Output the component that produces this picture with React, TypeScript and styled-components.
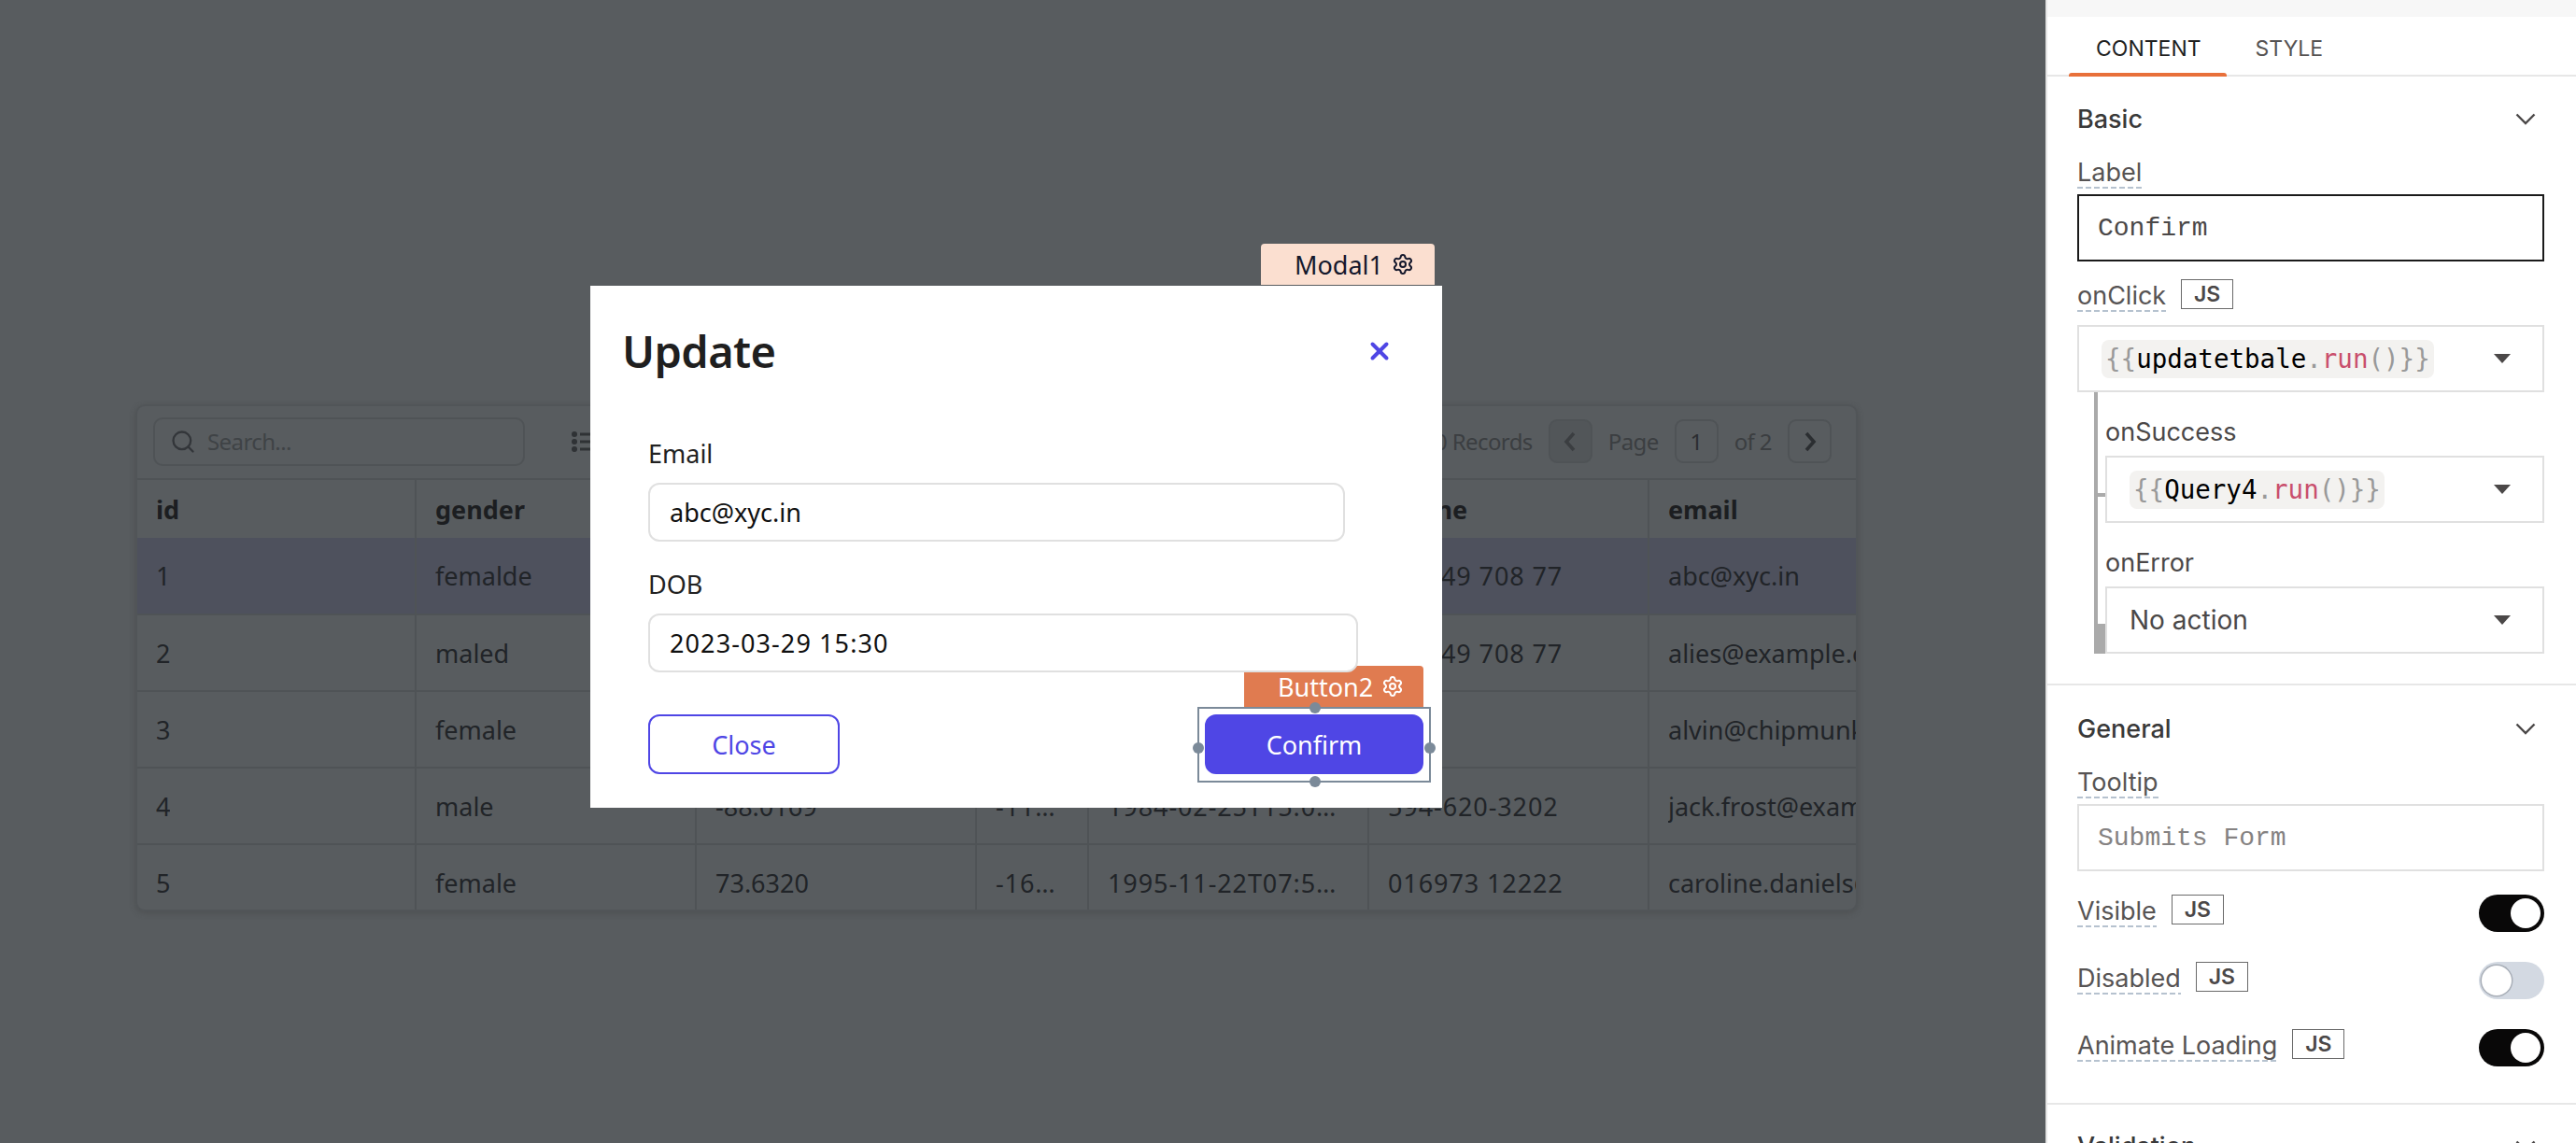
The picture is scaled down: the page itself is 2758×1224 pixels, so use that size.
import React from "react"
import styled, { createGlobalStyle } from "styled-components"
import { Search, Settings, X } from "lucide-react"

const GlobalStyle = createGlobalStyle`
  html, body {
    margin: 0;
    padding: 0;
    height: 1224px;
    overflow: hidden;
    background: #585c5f;
  }
  * {
    box-sizing: border-box;
  }
`

const BODY_FONT = `"Noto Sans", sans-serif`
const PANEL_FONT = `Inter, sans-serif`
const CODE_FONT = `"DejaVu Sans Mono", monospace`
const INPUT_FONT = `"Liberation Mono", monospace`

const Page = styled.div`
  display: flex;
  width: 2758px;
  height: 1224px;
  overflow: hidden;
`

const Canvas = styled.main`
  position: relative;
  width: 2190px;
  height: 1224px;
  flex: none;
  padding: 433px 0 0 145px;
  background: #585c5f;
  font-family: ${BODY_FONT};
`

/* table behind the modal */

const Table = styled.div`
  width: 1844px;
  height: 543px;
  overflow: hidden;
  border: 2px solid #515558;
  border-radius: 10px;
  box-shadow: 0 2px 6px rgba(60, 60, 60, 0.35);
`

const Toolbar = styled.div`
  display: flex;
  align-items: center;
  justify-content: space-between;
  height: 79px;
  padding: 0 26px 2px 17px;
  border-bottom: 2px solid #4f5356;
`

const SearchBox = styled.div`
  display: flex;
  align-items: center;
  gap: 12px;
  width: 398px;
  height: 52px;
  padding: 0 16px;
  border: 2px solid #4f5356;
  border-radius: 10px;
  color: #3f4346;
  font-size: 24px;
  letter-spacing: -0.6px;
`

const ToolbarLeft = styled.div`
  display: flex;
  align-items: center;
  gap: 49px;
`

const Pager = styled.div`
  display: flex;
  align-items: center;
  gap: 17px;
  color: #3b3e41;
  font-size: 24px;
  letter-spacing: -0.6px;
`

const PagerButton = styled.div<{ $disabled?: boolean }>`
  display: flex;
  align-items: center;
  justify-content: center;
  width: 47px;
  height: 47px;
  border: 2px solid #4f5356;
  border-radius: 9px;
  background: ${(p) => (p.$disabled ? "#525659" : "transparent")};
  color: ${(p) => (p.$disabled ? "#3b3e41" : "#2b2e31")};
`

const Row = styled.div<{ $selected?: boolean; $head?: boolean }>`
  display: grid;
  grid-template-columns: 299px 300px 300px 120px 300px 300px 221px;
  height: ${(p) => (p.$head ? 62 : p.$selected ? 83 : 82)}px;
  border-bottom: ${(p) => (p.$head ? "none" : "2px solid #4f5356")};
  background: ${(p) => (p.$selected ? "#4e515d" : "transparent")};
  color: ${(p) => (p.$head ? "#1c1e21" : "#212428")};
  font-size: 27px;
  font-weight: ${(p) => (p.$head ? 700 : 400)};
`

const Cell = styled.div<{ $clip?: boolean }>`
  display: flex;
  align-items: center;
  min-width: 0;
  padding: ${(p) => (p.$clip ? "0 0 0 20px" : "0 20px")};
  border-right: ${(p) => (p.$clip ? "none" : "2px solid #4f5356")};
  overflow: hidden;
`

const CellText = styled.span<{ $clip?: boolean; $wide?: boolean }>`
  overflow: hidden;
  white-space: nowrap;
  text-overflow: ${(p) => (p.$clip ? "clip" : "ellipsis")};
  letter-spacing: ${(p) => (p.$wide ? "0.9px" : "0")};
`

/* modal */

const Modal = styled.section`
  position: absolute;
  top: 306px;
  left: 632px;
  width: 912px;
  height: 559px;
  padding: 0 20px 0 34px;
  background: #ffffff;
  color: #222222;
  font-family: ${BODY_FONT};
`

const ModalHeader = styled.header`
  display: flex;
  align-items: center;
  justify-content: space-between;
  height: 160px;
  padding: 0 32px 20px 0;
`

const ModalTitle = styled.h1`
  margin: 0;
  font-size: 47px;
  font-weight: 600;
  letter-spacing: -0.6px;
  color: #1f1f1f;
`

const ModalField = styled.div<{ $width: number }>`
  width: ${(p) => p.$width}px;
  margin: 0 0 0 28px;
  padding-bottom: 26px;
`

const ModalLabel = styled.div`
  height: 40px;
  font-size: 27px;
  line-height: 40px;
`

const ModalInput = styled.div<{ $wide?: boolean }>`
  position: relative;
  z-index: 1;
  display: flex;
  align-items: center;
  height: 63px;
  margin-top: 11px;
  padding: 0 21px;
  border: 2px solid #e0e0e0;
  border-radius: 12px;
  background: #ffffff;
  color: #101010;
  font-size: 27px;
  letter-spacing: ${(p) => (p.$wide ? "1.1px" : "0")};
`

const ModalActions = styled.div`
  display: flex;
  justify-content: space-between;
  width: 830px;
  margin: 19px 0 0 28px;
`

const ActionButton = styled.div<{ $primary?: boolean; $width: number }>`
  position: relative;
  display: flex;
  align-items: center;
  justify-content: center;
  width: ${(p) => p.$width}px;
  height: 64px;
  border: 2px solid #4f46e5;
  border-radius: 12px;
  background: ${(p) => (p.$primary ? "#4f46e5" : "#ffffff")};
  color: ${(p) => (p.$primary ? "#ffffff" : "#4f46e5")};
  font-size: 27px;
`

const SelectionFrame = styled.div`
  position: absolute;
  top: -10px;
  right: -10px;
  bottom: -11px;
  left: -10px;
  border: 2px solid #7b8a99;
`

const Handle = styled.span<{ $side: "top" | "bottom" | "left" | "right" }>`
  position: absolute;
  width: 12px;
  height: 12px;
  border-radius: 50%;
  background: #7b8a99;
  ${(p) => p.$side === "top" && "top: -7px; left: 50%; margin-left: -5px;"}
  ${(p) => p.$side === "bottom" && "bottom: -7px; left: 50%; margin-left: -5px;"}
  ${(p) => p.$side === "left" && "left: -7px; top: 50%; margin-top: -3px;"}
  ${(p) => p.$side === "right" && "right: -7px; top: 50%; margin-top: -3px;"}
`

const WidgetTag = styled.div<{ $dark?: boolean }>`
  position: absolute;
  display: flex;
  align-items: center;
  gap: 9px;
  height: 44px;
  padding: 0 17px 0 36px;
  border-radius: 4px 4px 0 0;
  background: ${(p) => (p.$dark ? "#e07b50" : "#fbdfd0")};
  color: ${(p) => (p.$dark ? "#ffffff" : "#14182c")};
  font-family: ${BODY_FONT};
  font-size: 27px;
  white-space: nowrap;
`

const ModalTag = styled(WidgetTag)`
  top: 261px;
  left: 1350px;
  width: 186px;
`

const ButtonTag = styled(WidgetTag)`
  top: -54px;
  left: 40px;
  width: 192px;
`

/* property pane */

const Panel = styled.aside`
  width: 568px;
  height: 1224px;
  flex: none;
  overflow: hidden;
  border-left: 2px solid #e4e4e4;
  background: #ffffff;
  color: #4b4848;
  font-family: ${PANEL_FONT};
`

const PanelTop = styled.div`
  height: 18px;
  background: #f7f7f7;
`

const Tabs = styled.nav`
  display: flex;
  gap: 58px;
  height: 64px;
  padding-left: 52px;
  border-bottom: 2px solid #e7e7e7;
`

const Tab = styled.div<{ $active?: boolean }>`
  position: relative;
  height: 62px;
  padding-top: 18px;
  color: ${(p) => (p.$active ? "#1f1f1f" : "#555252")};
  font-size: 23px;
  line-height: 32px;
  ${(p) =>
    p.$active &&
    `&::after {
      content: "";
      position: absolute;
      left: -29px;
      right: -27px;
      bottom: -2px;
      height: 4px;
      border-radius: 3px 3px 0 0;
      background: #e8703a;
    }`}
`

const Section = styled.section<{ $pad: number }>`
  padding: 0 34px ${(p) => p.$pad}px 32px;
  border-bottom: 2px solid #e7e7e7;
`

const SectionHeader = styled.div<{ $top: number }>`
  display: flex;
  align-items: center;
  justify-content: space-between;
  height: 46px;
  margin-top: ${(p) => p.$top}px;
  padding-right: 9px;
  color: #393939;
  font-size: 27px;
  font-weight: 500;
`

const FieldRow = styled.div<{ $top: number; $between?: boolean }>`
  display: flex;
  align-items: flex-start;
  justify-content: ${(p) => (p.$between ? "space-between" : "flex-start")};
  margin-top: ${(p) => p.$top}px;
`

const LabelGroup = styled.div`
  display: flex;
  align-items: flex-start;
  gap: 16px;
`

const DashedLabel = styled.span<{ $offset?: number }>`
  display: block;
  height: 32px;
  margin-top: ${(p) => p.$offset ?? 0}px;
  padding-bottom: 2px;
  font-size: 27px;
  line-height: 30px;
  color: #575454;
  background: linear-gradient(to right, #b6c2cf 65%, transparent 0) left bottom / 9px 2px repeat-x;
  white-space: nowrap;
`

const JsBadge = styled.span`
  display: flex;
  align-items: center;
  justify-content: center;
  width: 56px;
  height: 32px;
  border: 1.5px solid #6a6a6a;
  color: #4b4848;
  font-size: 23px;
  font-weight: 600;
`

const TextInput = styled.div<{ $focused?: boolean; $muted?: boolean }>`
  display: flex;
  align-items: center;
  height: 72px;
  margin-top: 6px;
  padding-left: 20px;
  border: 2px solid ${(p) => (p.$focused ? "#1a1a1a" : "#e0e0e0")};
  color: ${(p) => (p.$muted ? "#858282" : "#4b4848")};
  font-family: ${INPUT_FONT};
  font-size: 28px;
`

const Dropdown = styled.div<{ $top: number }>`
  display: flex;
  align-items: center;
  justify-content: space-between;
  height: 72px;
  margin-top: ${(p) => p.$top}px;
  padding: 0 34px 0 24px;
  border: 2px solid #e0e0e0;
  font-size: 28px;
`

const CodeChip = styled.span`
  display: inline-block;
  height: 41px;
  padding: 0 4px;
  border-radius: 8px;
  background: #f3f2f0;
  color: #000000;
  font-family: ${CODE_FONT};
  font-size: 27.5px;
  line-height: 41px;
  white-space: nowrap;
`

const Brace = styled.span`
  color: #999999;
`

const Method = styled.span`
  color: #c94f6d;
`

const Nested = styled.div`
  position: relative;
  display: flow-root;
  margin-left: 18px;
  padding-left: 8px;
  border-left: 4px solid #aaaaaa;

  &::before {
    content: "";
    position: absolute;
    left: 0;
    top: 108px;
    width: 8px;
    height: 4px;
    background: #aaaaaa;
  }

  &::after {
    content: "";
    position: absolute;
    left: 0;
    bottom: 0;
    width: 8px;
    height: 32px;
    background: #aaaaaa;
  }
`

const NestedLabel = styled.div`
  height: 30px;
  margin-top: 28px;
  font-size: 27px;
  line-height: 30px;
  color: #4b4848;
`

const Toggle = styled.div<{ $on?: boolean }>`
  position: relative;
  width: 70px;
  height: 40px;
  border-radius: 20px;
  background: ${(p) => (p.$on ? "#090808" : "#d3d9e2")};

  &::after {
    content: "";
    position: absolute;
    top: 4px;
    left: ${(p) => (p.$on ? "34px" : "3px")};
    width: 32px;
    height: 32px;
    border-radius: 50%;
    background: #ffffff;
    box-shadow: ${(p) => (p.$on ? "none" : "0 0 0 1.5px #a9afb8")};
  }
`

const Chevron = () => (
  <svg width="22" height="13" viewBox="0 0 22 13">
    <polyline points="1.5,1.5 11,11 20.5,1.5" fill="none" stroke="#4b4848" strokeWidth="2.4" />
  </svg>
)

const Caret = () => (
  <svg width="18" height="10" viewBox="0 0 18 10">
    <polygon points="0,0 18,0 9,10" fill="#4b4848" />
  </svg>
)

const PagerArrow = ({ dir }: { dir: "left" | "right" }) => (
  <svg width="14" height="24" viewBox="0 0 14 24">
    <polyline
      points={dir === "left" ? "11,3 3,12 11,21" : "3,3 11,12 3,21"}
      fill="none"
      stroke="currentColor"
      strokeWidth="3.6"
    />
  </svg>
)

const FilterIcon = () => (
  <svg width="36" height="24" viewBox="0 0 36 24">
    <g fill="#2f3235">
      <circle cx="4" cy="4" r="3" />
      <rect x="10" y="2.5" width="26" height="3" />
      <circle cx="4" cy="12" r="3" />
      <rect x="10" y="10.5" width="26" height="3" />
      <circle cx="4" cy="20" r="3" />
      <rect x="10" y="18.5" width="26" height="3" />
    </g>
  </svg>
)

const columns = ["id", "gender", "latitude", "longitude", "dob", "phone", "email"]

const rows = [
  ["1", "femalde", "-49.4337", "-16.2", "1970-01-01T00:00:00.000Z", "762 49 708 77", "abc@xyc.in"],
  ["2", "maled", "-49.4337", "-16.2", "1970-01-01T00:00:00.000Z", "762 49 708 77", "alies@example.com"],
  ["3", "female", "", "", "", "", "alvin@chipmunk.com"],
  ["4", "male", "-88.0169", "-118.9135", "1984-02-25T15:02:10.000Z", "594-620-3202", "jack.frost@example.com"],
  ["5", "female", "73.6320", "-160.5472", "1995-11-22T07:52:13.000Z", "016973 12222", "caroline.daniels@example.com"],
]

const Code = ({ name }: { name: string }) => (
  <CodeChip>
    <Brace>{"{{"}</Brace>
    {name}
    <Brace>.</Brace>
    <Method>run</Method>
    <Brace>{"()}}"}</Brace>
  </CodeChip>
)

const App: React.FC = () => (
  <Page>
    <GlobalStyle />
    <Canvas>
      <Table>
        <Toolbar>
          <ToolbarLeft>
            <SearchBox>
              <Search size={28} color="#33363a" strokeWidth={2} />
              Search...
            </SearchBox>
            <FilterIcon />
          </ToolbarLeft>
          <Pager>
            <span>10 Records</span>
            <PagerButton $disabled>
              <PagerArrow dir="left" />
            </PagerButton>
            <span>Page</span>
            <PagerButton>1</PagerButton>
            <span>of 2</span>
            <PagerButton>
              <PagerArrow dir="right" />
            </PagerButton>
          </Pager>
        </Toolbar>
        <Row $head>
          {columns.map((c, i) => (
            <Cell key={c} $clip={i === 6}>
              <CellText>{c}</CellText>
            </Cell>
          ))}
        </Row>
        {rows.map((r, idx) => (
          <Row key={r[0]} $selected={idx === 0}>
            {r.map((v, i) => (
              <Cell key={i} $clip={i === 6}>
                <CellText $clip={i === 6} $wide={i >= 3 && i <= 5}>
                  {v}
                </CellText>
              </Cell>
            ))}
          </Row>
        ))}
      </Table>

      <ModalTag>
        Modal1
        <Settings size={24} strokeWidth={2} />
      </ModalTag>
      <Modal>
        <ModalHeader>
          <ModalTitle>Update</ModalTitle>
          <X size={30} color="#4f46e5" strokeWidth={3.2} />
        </ModalHeader>
        <ModalField $width={746}>
          <ModalLabel>Email</ModalLabel>
          <ModalInput>abc@xyc.in</ModalInput>
        </ModalField>
        <ModalField $width={760}>
          <ModalLabel>DOB</ModalLabel>
          <ModalInput $wide>2023-03-29 15:30</ModalInput>
        </ModalField>
        <ModalActions>
          <ActionButton $width={205}>Close</ActionButton>
          <ActionButton $width={234} $primary>
            Confirm
            <ButtonTag $dark>
              Button2
              <Settings size={24} strokeWidth={2} />
            </ButtonTag>
            <SelectionFrame>
              <Handle $side="top" />
              <Handle $side="bottom" />
              <Handle $side="left" />
              <Handle $side="right" />
            </SelectionFrame>
          </ActionButton>
        </ModalActions>
      </Modal>
    </Canvas>

    <Panel>
      <PanelTop />
      <Tabs>
        <Tab $active>CONTENT</Tab>
        <Tab>STYLE</Tab>
      </Tabs>

      <Section $pad={32}>
        <SectionHeader $top={22}>
          Basic
          <Chevron />
        </SectionHeader>
        <FieldRow $top={20}>
          <DashedLabel>Label</DashedLabel>
        </FieldRow>
        <TextInput $focused>Confirm</TextInput>
        <FieldRow $top={19}>
          <LabelGroup>
            <DashedLabel $offset={3}>onClick</DashedLabel>
            <JsBadge>JS</JsBadge>
          </LabelGroup>
        </FieldRow>
        <Dropdown $top={14}>
          <Code name="updatetbale" />
          <Caret />
        </Dropdown>
        <Nested>
          <NestedLabel>onSuccess</NestedLabel>
          <Dropdown $top={10}>
            <Code name="Query4" />
            <Caret />
          </Dropdown>
          <NestedLabel>onError</NestedLabel>
          <Dropdown $top={10}>
            No action
            <Caret />
          </Dropdown>
        </Nested>
      </Section>

      <Section $pad={39}>
        <SectionHeader $top={23}>
          General
          <Chevron />
        </SectionHeader>
        <FieldRow $top={20}>
          <DashedLabel>Tooltip</DashedLabel>
        </FieldRow>
        <TextInput $muted>Submits Form</TextInput>
        <FieldRow $top={25} $between>
          <LabelGroup>
            <DashedLabel $offset={3}>Visible</DashedLabel>
            <JsBadge>JS</JsBadge>
          </LabelGroup>
          <Toggle $on />
        </FieldRow>
        <FieldRow $top={32} $between>
          <LabelGroup>
            <DashedLabel $offset={3}>Disabled</DashedLabel>
            <JsBadge>JS</JsBadge>
          </LabelGroup>
          <Toggle />
        </FieldRow>
        <FieldRow $top={32} $between>
          <LabelGroup>
            <DashedLabel $offset={3}>Animate Loading</DashedLabel>
            <JsBadge>JS</JsBadge>
          </LabelGroup>
          <Toggle $on />
        </FieldRow>
      </Section>

      <Section $pad={0}>
        <SectionHeader $top={21}>
          Validation
          <Chevron />
        </SectionHeader>
      </Section>
    </Panel>
  </Page>
)

export default App
